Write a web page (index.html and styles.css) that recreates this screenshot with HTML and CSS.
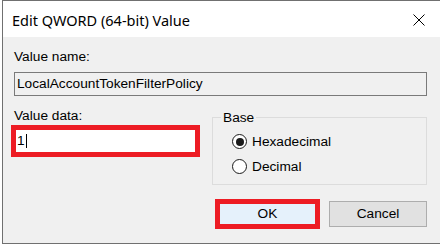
FILE: index.html
```html
<!DOCTYPE html>
<html>
<head>
<meta charset="utf-8">
<link rel="stylesheet" href="styles.css">
</head>
<body>
<div class="window">
  <div class="titlebar">
    <span class="title">Edit QWORD (64-bit) Value</span>
    <svg class="close" width="12" height="12" viewBox="0 0 12 12"><path d="M0.5 0.5 L11.5 11.5 M11.5 0.5 L0.5 11.5" stroke="#000" stroke-width="1" fill="none"/></svg>
  </div>
  <div class="content">
    <div class="label">Value name:</div>
    <div class="field readonly">LocalAccountTokenFilterPolicy</div>
    <div class="row">
      <div class="data-col">
        <div class="label">Value data:</div>
        <div class="highlight"><div class="field edit">1<span class="caret"></span></div></div>
      </div>
      <fieldset class="base">
        <legend>Base</legend>
        <div class="radio"><span class="dot checked"></span>Hexadecimal</div>
        <div class="radio"><span class="dot"></span>Decimal</div>
      </fieldset>
    </div>
    <div class="buttons">
      <div class="highlight"><div class="btn ok">OK</div></div>
      <div class="btn cancel">Cancel</div>
    </div>
  </div>
</div>
</body>
</html>
```

FILE: styles.css
```css
html, body {
  margin: 0;
  padding: 0;
  background: #ffffff;
}
body {
  width: 440px;
  height: 245px;
  overflow: hidden;
  font-family: "Liberation Sans", Arial, sans-serif;
  font-size: 13.7px;
  color: #000;
}
.window {
  margin-left: 2px;
  width: 438px;
  height: 244px;
  box-sizing: border-box;
  border: 1px solid #707070;
  border-right: none;
  display: flex;
  flex-direction: column;
}
.titlebar {
  height: 36px;
  flex: none;
  background: #ffffff;
  display: flex;
  align-items: center;
  justify-content: space-between;
  padding: 0 15px 0 9px;
}
.title {
  font-family: "Noto Sans", "Open Sans", sans-serif;
  font-size: 14.5px;
  line-height: 20px;
  margin-top: 1px;
}
.close {
  display: block;
  margin-top: 1px;
}
.content {
  flex: 1;
  background: #f0f0f0;
  padding: 12px 13px 0 11px;
}
.label {
  line-height: 15px;
}
.field {
  box-sizing: border-box;
  line-height: 22px;
  white-space: nowrap;
}
.readonly {
  margin-top: 8px;
  height: 24px;
  border: 1px solid #7a7a7a;
  padding-left: 2px;
  background: #f0f0f0;
}
.row {
  display: flex;
  margin-top: 12px;
}
.data-col {
  width: 189px;
  margin-left: -3px;
  display: flex;
  flex-direction: column;
}
.data-col .label {
  margin-left: 3px;
}
.highlight {
  border: 5px solid #ed1c24;
}
.data-col .highlight {
  margin-top: 2px;
}
.edit {
  height: 22px;
  background: #ffffff;
  padding-left: 1px;
  display: flex;
  align-items: center;
}
.caret {
  display: inline-block;
  width: 1px;
  height: 14px;
  background: #000;
  margin-left: 1px;
}
.base {
  flex: 1;
  margin: 2px 0 0 12px;
  padding: 4px 0 5px 19px;
  border: 1px solid #dcdcdc;
  min-width: 0;
}
.base legend {
  line-height: 15px;
  padding: 0 2px;
  margin-left: -11px;
}
.radio {
  height: 25px;
  display: flex;
  align-items: center;
}
.dot {
  width: 15px;
  height: 15px;
  box-sizing: border-box;
  border: 1.5px solid #1a1a1a;
  border-radius: 50%;
  background: #fff;
  margin-right: 5px;
  display: flex;
  align-items: center;
  justify-content: center;
}
.dot.checked::after {
  content: "";
  width: 8px;
  height: 8px;
  border-radius: 50%;
  background: #1a1a1a;
}
.buttons {
  display: flex;
  justify-content: flex-end;
  align-items: center;
  gap: 9px;
  margin-top: 14px;
}
.btn {
  box-sizing: border-box;
  text-align: center;
}
.ok {
  width: 95px;
  height: 20px;
  line-height: 20px;
  background: #e5f1fb;
}
.cancel {
  width: 98px;
  height: 26px;
  line-height: 24px;
  border: 1px solid #adadad;
  background: #e1e1e1;
}
```
